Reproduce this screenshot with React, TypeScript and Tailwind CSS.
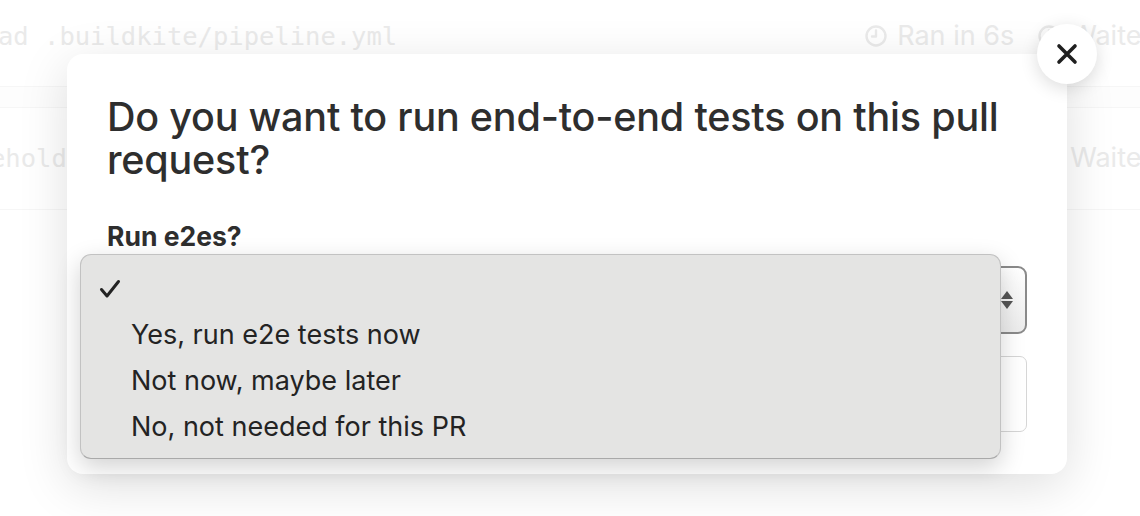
const ClockIcon = () => (
  <svg width="22" height="22" viewBox="0 0 22 22" fill="none">
    <circle cx="11" cy="11" r="9.5" stroke="currentColor" strokeWidth="2.4" />
    <path d="M11 5.5V11.5H7" stroke="currentColor" strokeWidth="2.4" strokeLinecap="round" strokeLinejoin="round" />
  </svg>
);

const options = ["Yes, run e2e tests now", "Not now, maybe later", "No, not needed for this PR"];

export default function App() {
  return (
    <div className="relative w-[1140px] h-[516px] overflow-hidden bg-white font-['Inter',sans-serif]">
      {/* page behind the modal */}
      <div className="flex flex-col text-[#eaeaea]">
        <div className="h-[87px] flex items-center justify-between border-b border-[#f6f6f6]">
          <span className="font-['DejaVu_Sans_Mono',monospace] text-[25.5px] -ml-[2px] -mt-[14px]">ad .buildkite/pipeline.yml</span>
          <div className="flex items-center gap-6 text-[27px] -mt-[14px] -mr-[18px]">
            <span className="flex items-center gap-2.5"><ClockIcon />Ran in 6s</span>
            <span className="flex items-center gap-2.5"><ClockIcon />Waited</span>
          </div>
        </div>
        <div className="h-[21px] border-b border-[#f6f6f6] bg-[#fdfdfd]" />
        <div className="h-[102px] flex items-center justify-between border-b border-[#f6f6f6]">
          <span className="font-['DejaVu_Sans_Mono',monospace] text-[25.5px] -ml-[10px]">eholder</span>
          <span className="text-[27px] -mr-[18px]">Waited</span>
        </div>
      </div>

      {/* modal */}
      <div className="absolute left-[67px] top-[54px] w-[1000px] h-[420px] rounded-[16px] bg-white shadow-[0_12px_50px_rgba(0,0,0,0.13)] px-10 pt-[42px]">
        <h1 className="text-[39.5px] leading-[43px] font-medium text-[#2e2e2e] tracking-[-0.2px]">
          Do you want to run end-to-end tests on this pull request?
        </h1>
        <div className="mt-[38px] text-[26.5px] leading-[32px] font-bold text-[#2e2e2e]">Run e2es?</div>
        <div className="mt-[14px] h-[68px] rounded-[9px] border-2 border-[#8a8a8a] bg-gradient-to-b from-white to-[#ececec] flex items-center justify-end pr-[11px]">
          <svg width="14" height="20" viewBox="0 0 14 20" fill="#555">
            <path d="M7 1L13 9H1Z" />
            <path d="M7 19L13 11H1Z" />
          </svg>
        </div>
        <div className="mt-[22px] h-[76px] rounded-[7px] border border-[#d6d6d6] bg-white" />

        {/* open native menu */}
        <div className="absolute left-[13px] top-[200px] w-[921px] h-[205px] rounded-[11px] bg-[#e4e4e3] border border-[#c2c2c2] border-b-[#a9a9a9] shadow-[0_8px_24px_rgba(0,0,0,0.18)] pt-[11px] text-[27px] text-[#232323]">
          <div className="h-[46px] flex items-center pl-[18px]">
            <svg width="22" height="20" viewBox="0 0 22 20" fill="none">
              <path d="M2.5 10.5L8 17L19.5 2.5" stroke="#232323" strokeWidth="3" strokeLinecap="round" strokeLinejoin="round" />
            </svg>
          </div>
          {options.map((o) => (
            <div key={o} className="h-[46px] flex items-center pl-[50px]">{o}</div>
          ))}
        </div>
      </div>

      {/* close button */}
      <button className="absolute left-[1037px] top-[24px] w-[60px] h-[60px] rounded-full bg-white shadow-[0_4px_18px_rgba(0,0,0,0.14)] flex items-center justify-center">
        <svg width="22" height="22" viewBox="0 0 22 22" fill="none">
          <path d="M3 3L19 19M19 3L3 19" stroke="#1f1f1f" strokeWidth="3.6" strokeLinecap="round" />
        </svg>
      </button>
    </div>
  );
}
